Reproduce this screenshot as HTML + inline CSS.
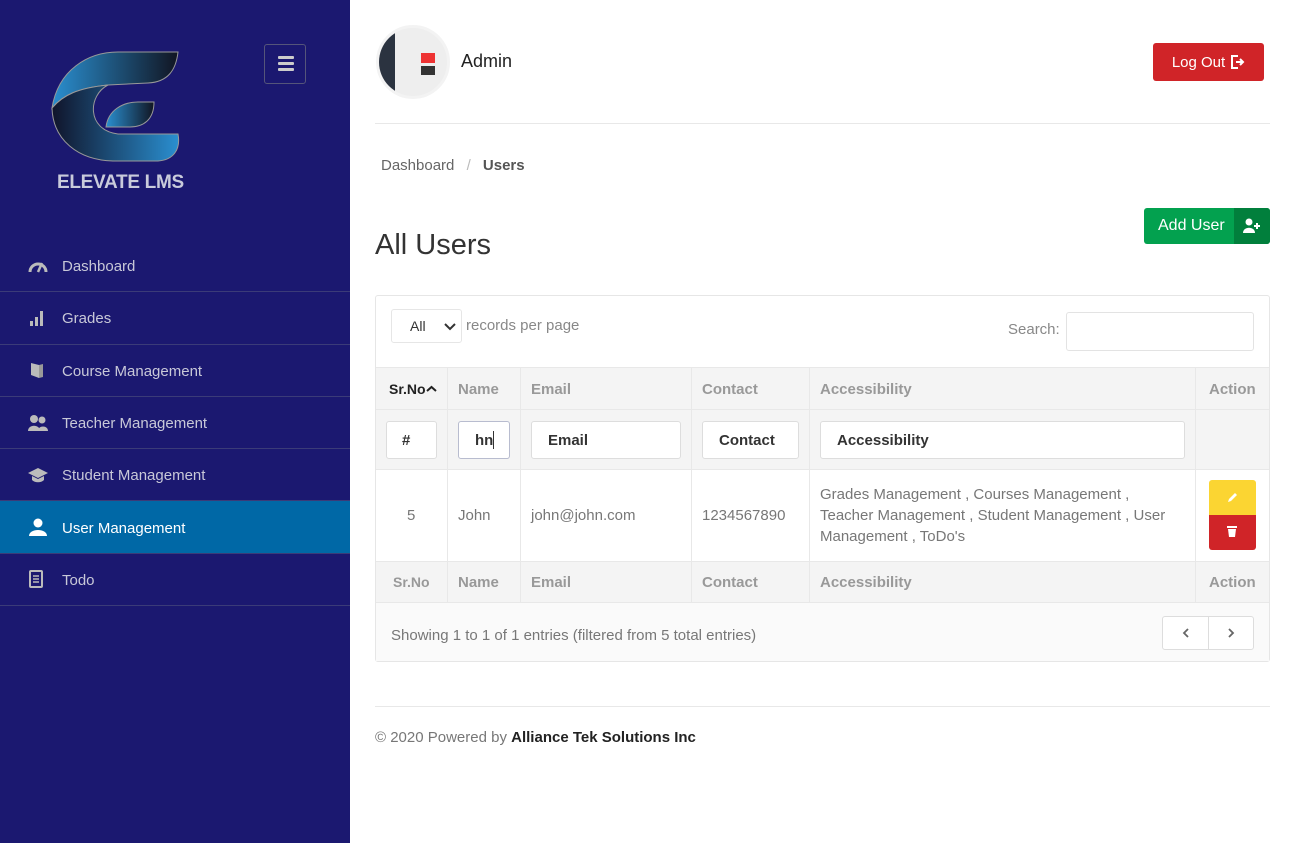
<!DOCTYPE html>
<html><head><style>
*{box-sizing:border-box;margin:0;padding:0}
body{width:1295px;height:843px;font-family:"Liberation Sans",sans-serif;background:#fff;position:relative;overflow:hidden;color:#333}
.sb{position:absolute;left:0;top:0;width:350px;height:843px;background:#1b1870}
.ham{position:absolute;left:264px;top:44px;width:42px;height:40px;border:1px solid #55557a;border-radius:3px}
.ham i{position:absolute;left:13px;width:16px;height:3px;background:#ccc;border-radius:1px}
.nav{position:absolute;left:0;top:240px;width:350px}
.nav div{height:52.3px;border-bottom:1px solid #3b3b78;color:#c8c8d8;font-size:15px;display:flex;align-items:center;padding-left:62px;position:relative;padding-top:2px}
.nav div.act{background:#0068a6;color:#fff}
.nav svg{position:absolute;left:28px;top:50%;transform:translateY(-50%)}
.abs{position:absolute}
.tbl{position:absolute;left:375px;top:295px;width:895px;height:367px;border:1px solid #e6e6e6;border-radius:3px}
.cell{position:absolute;font-size:15px;display:flex;align-items:center}
.inp{position:absolute;background:#fff;border:1px solid #ddd;border-radius:3px;font-size:15px;font-weight:bold;color:#333;display:flex;align-items:center}
</style></head><body>
<div class="sb">
<svg class="abs" style="left:48px;top:50px" width="135" height="115" viewBox="0 0 135 115">
<defs><linearGradient id="g1" x1="0" x2="1"><stop offset="0" stop-color="#2a8fd0"/><stop offset="1" stop-color="#111522"/></linearGradient>
<linearGradient id="g2" x1="0" x2="1"><stop offset="0" stop-color="#10142a"/><stop offset="1" stop-color="#2a8fd0"/></linearGradient></defs>
<path d="M4 58 C10 20 40 2 70 2 L130 2 C128 20 120 32 100 33 L60 35 C30 38 15 45 4 58Z" fill="url(#g1)" stroke="#999" stroke-width="1"/>
<path d="M4 58 C15 45 30 38 60 35 C40 45 38 80 70 84 L130 84 C133 100 125 110 110 111 L65 111 C30 110 5 90 4 58Z" fill="url(#g2)" stroke="#999" stroke-width="1"/>
<path d="M58 77 C60 60 75 52 90 52 L106 52 C106 70 95 77 82 77Z" fill="url(#g1)" stroke="#999" stroke-width="1"/>
</svg>
<div class="abs" style="left:57px;top:172px;font-size:19px;font-weight:bold;color:#c9cbdb;letter-spacing:-0.3px">ELEVATE LMS</div>
<div class="ham"><i style="top:11px"></i><i style="top:17px"></i><i style="top:23px"></i></div>
<div class="nav">
<div><svg width="20" height="16" viewBox="0 0 20 16"><path d="M2 14 A8 8 0 0 1 18 14" fill="none" stroke="#bbb" stroke-width="3"/><path d="M10 14 L14 5" stroke="#bbb" stroke-width="2.5"/></svg>Dashboard</div>
<div><svg width="18" height="16" viewBox="0 0 18 16"><rect x="2" y="11" width="3" height="5" fill="#bbb"/><rect x="7" y="7" width="3" height="9" fill="#bbb"/><rect x="12" y="1" width="3" height="15" fill="#bbb"/></svg>Grades</div>
<div><svg width="18" height="18" viewBox="0 0 18 18"><path d="M3 2 L11 4 L11 17 L3 14Z" fill="#bbb"/><path d="M11 4 L15 3 L15 16 L11 17Z" fill="#999"/></svg>Course Management</div>
<div><svg width="20" height="18" viewBox="0 0 20 18"><circle cx="6" cy="5" r="4" fill="#bbb"/><circle cx="14" cy="6" r="3.5" fill="#bbb"/><path d="M0 17 C0 10 12 10 12 17Z" fill="#bbb"/><path d="M10 17 C10 11 20 11 20 17Z" fill="#bbb"/></svg>Teacher Management</div>
<div><svg width="20" height="16" viewBox="0 0 20 16"><path d="M0 6 L10 1 L20 6 L10 11Z" fill="#bbb"/><path d="M4 9 L4 13 C7 16 13 16 16 13 L16 9 L10 12Z" fill="#bbb"/></svg>Student Management</div>
<div class="act"><svg width="20" height="18" viewBox="0 0 20 18"><circle cx="10" cy="5" r="4.5" fill="#fff"/><path d="M1 18 C1 10 19 10 19 18Z" fill="#fff"/></svg>User Management</div>
<div><svg width="16" height="18" viewBox="0 0 16 18"><rect x="2" y="1" width="12" height="16" rx="1" fill="none" stroke="#bbb" stroke-width="2"/><path d="M5 6h6M5 9h6M5 12h6" stroke="#bbb" stroke-width="1.5"/></svg>Todo</div>
</div>
</div>

<div class="abs" style="left:376px;top:25px;width:74px;height:74px;border-radius:50%;background:#eee;border:3px solid #f3f3f3;overflow:hidden">
<div class="abs" style="left:0;top:0;width:16px;height:74px;background:#2b3340"></div>
<div class="abs" style="left:42px;top:25px;width:14px;height:10px;background:#e33"></div>
<div class="abs" style="left:42px;top:38px;width:14px;height:9px;background:#333"></div>
</div>
<div class="abs" style="left:461px;top:51px;font-size:18px;color:#222">Admin</div>
<div class="abs" style="left:1153px;top:43px;width:111px;height:38px;background:#d02428;border-radius:3px;color:#fff;font-size:15px;display:flex;align-items:center;justify-content:center;gap:6px">Log Out <svg width="14" height="14" viewBox="0 0 14 14"><path d="M7 1H1v12h6" fill="none" stroke="#fff" stroke-width="2"/><path d="M5 7h6M9 4l3 3-3 3" fill="none" stroke="#fff" stroke-width="2"/></svg></div>
<div class="abs" style="left:375px;top:123px;width:895px;height:1px;background:#e8e8e8"></div>
<div class="abs" style="left:381px;top:157px;font-size:15px;color:#666">Dashboard <span style="color:#bbb;margin:0 8px">/</span> <b style="color:#555">Users</b></div>
<div class="abs" style="left:375px;top:229px;font-size:29px;color:#333">All Users</div>
<div class="abs" style="left:1144px;top:208px;width:126px;height:36px;background:#03a14f;border-radius:3px;overflow:hidden;color:#fff;font-size:16px">
<div class="abs" style="left:14px;top:9px">Add User</div>
<div class="abs" style="left:90px;top:0;width:36px;height:36px;background:#017f3c"><svg class="abs" style="left:9px;top:10px" width="18" height="16" viewBox="0 0 18 16"><circle cx="6" cy="4" r="3.5" fill="#fff"/><path d="M0 15 C0 8 12 8 12 15Z" fill="#fff"/><path d="M14 5v6M11 8h6" stroke="#fff" stroke-width="2"/></svg></div>
</div>

<div class="tbl"></div>
<div class="inp" style="left:391px;top:309px;width:71px;height:34px;border-color:#e6e6e6;font-weight:normal;padding-left:18px;font-size:14px">All<svg class="abs" style="left:52px;top:13px" width="12" height="8" viewBox="0 0 12 8"><path d="M1 1l5 5 5-5" fill="none" stroke="#333" stroke-width="2"/></svg></div>
<div class="abs" style="left:466px;top:317px;font-size:15px;color:#888">records per page</div>
<div class="abs" style="left:1008px;top:321px;font-size:15px;color:#888">Search:</div>
<div class="inp" style="left:1066px;top:312px;width:188px;height:39px;border-color:#e3e3e3"></div>

<div class="abs" style="left:376px;top:367px;width:893px;height:43px;background:#f4f4f4;border-top:1px solid #e8e8e8;border-bottom:1px solid #e8e8e8"></div>
<div class="abs" style="left:376px;top:410px;width:893px;height:60px;background:#f4f4f4;border-bottom:1px solid #e8e8e8"></div>
<div class="abs" style="left:376px;top:561px;width:893px;height:42px;background:#f4f4f4;border-top:1px solid #e8e8e8;border-bottom:1px solid #e8e8e8"></div>
<div class="abs" style="left:376px;top:603px;width:893px;height:58px;background:#fafafa"></div>
<div class="abs" style="left:447px;top:367px;width:1px;height:236px;background:#e8e8e8"></div>
<div class="abs" style="left:520px;top:367px;width:1px;height:236px;background:#e8e8e8"></div>
<div class="abs" style="left:691px;top:367px;width:1px;height:236px;background:#e8e8e8"></div>
<div class="abs" style="left:809px;top:367px;width:1px;height:236px;background:#e8e8e8"></div>
<div class="abs" style="left:1195px;top:367px;width:1px;height:236px;background:#e8e8e8"></div>

<div class="cell" style="left:389px;top:381px;font-weight:bold;color:#222;font-size:14px">Sr.No<svg width="11" height="8" viewBox="0 0 11 8"><path d="M1 6l4.5-4 4.5 4" fill="none" stroke="#222" stroke-width="2"/></svg></div>
<div class="cell" style="left:458px;top:381px;font-weight:bold;color:#999">Name</div>
<div class="cell" style="left:531px;top:381px;font-weight:bold;color:#999">Email</div>
<div class="cell" style="left:702px;top:381px;font-weight:bold;color:#999">Contact</div>
<div class="cell" style="left:820px;top:381px;font-weight:bold;color:#999">Accessibility</div>
<div class="cell" style="left:1209px;top:381px;font-weight:bold;color:#999">Action</div>

<div class="inp" style="left:386px;top:421px;width:51px;height:38px;padding-left:15px">#</div>
<div class="inp" style="left:458px;top:421px;width:52px;height:38px;padding-left:16px;border-color:#b8bccf">hn<span style="display:inline-block;width:1px;height:18px;background:#333"></span></div>
<div class="inp" style="left:531px;top:421px;width:150px;height:38px;padding-left:16px">Email</div>
<div class="inp" style="left:702px;top:421px;width:97px;height:38px;padding-left:16px">Contact</div>
<div class="inp" style="left:820px;top:421px;width:365px;height:38px;padding-left:16px">Accessibility</div>

<div class="cell" style="left:407px;top:507px;color:#777">5</div>
<div class="cell" style="left:458px;top:507px;color:#777">John</div>
<div class="cell" style="left:531px;top:507px;color:#777">john@john.com</div>
<div class="cell" style="left:702px;top:507px;color:#777">1234567890</div>
<div class="abs" style="left:820px;top:484px;width:352px;font-size:15px;line-height:21px;color:#777">Grades Management , Courses Management , Teacher Management , Student Management , User Management , ToDo's</div>
<div class="abs" style="left:1209px;top:480px;width:47px;height:35px;background:#fbd532;border-radius:3px 3px 0 0"><svg class="abs" style="left:18px;top:11px" width="12" height="12" viewBox="0 0 12 12"><path d="M1 11l1-3 6-6 2 2-6 6z" fill="#fff"/></svg></div>
<div class="abs" style="left:1209px;top:515px;width:47px;height:35px;background:#d02428;border-radius:0 0 3px 3px"><svg class="abs" style="left:17px;top:9px" width="12" height="14" viewBox="0 0 12 14"><rect x="1" y="2" width="10" height="2" fill="#fff"/><path d="M2 5h8l-1 8H3z" fill="#fff"/></svg></div>

<div class="cell" style="left:393px;top:574px;font-weight:bold;color:#999;font-size:14px">Sr.No</div>
<div class="cell" style="left:458px;top:574px;font-weight:bold;color:#999">Name</div>
<div class="cell" style="left:531px;top:574px;font-weight:bold;color:#999">Email</div>
<div class="cell" style="left:702px;top:574px;font-weight:bold;color:#999">Contact</div>
<div class="cell" style="left:820px;top:574px;font-weight:bold;color:#999">Accessibility</div>
<div class="cell" style="left:1209px;top:574px;font-weight:bold;color:#999">Action</div>

<div class="cell" style="left:391px;top:627px;color:#777">Showing 1 to 1 of 1 entries (filtered from 5 total entries)</div>
<div class="abs" style="left:1162px;top:616px;width:92px;height:34px;border:1px solid #ddd;border-radius:3px;background:#fff">
<div class="abs" style="left:45px;top:0;width:1px;height:32px;background:#ddd"></div>
<svg class="abs" style="left:19px;top:11px" width="8" height="10" viewBox="0 0 8 10"><path d="M6 1L2 5l4 4" fill="none" stroke="#666" stroke-width="1.8"/></svg>
<svg class="abs" style="left:64px;top:11px" width="8" height="10" viewBox="0 0 8 10"><path d="M2 1l4 4-4 4" fill="none" stroke="#666" stroke-width="1.8"/></svg>
</div>

<div class="abs" style="left:375px;top:706px;width:895px;height:1px;background:#e8e8e8"></div>
<div class="abs" style="left:375px;top:729px;font-size:15px;color:#777">© 2020 Powered by <b style="color:#222">Alliance Tek Solutions Inc</b></div>
</body></html>
